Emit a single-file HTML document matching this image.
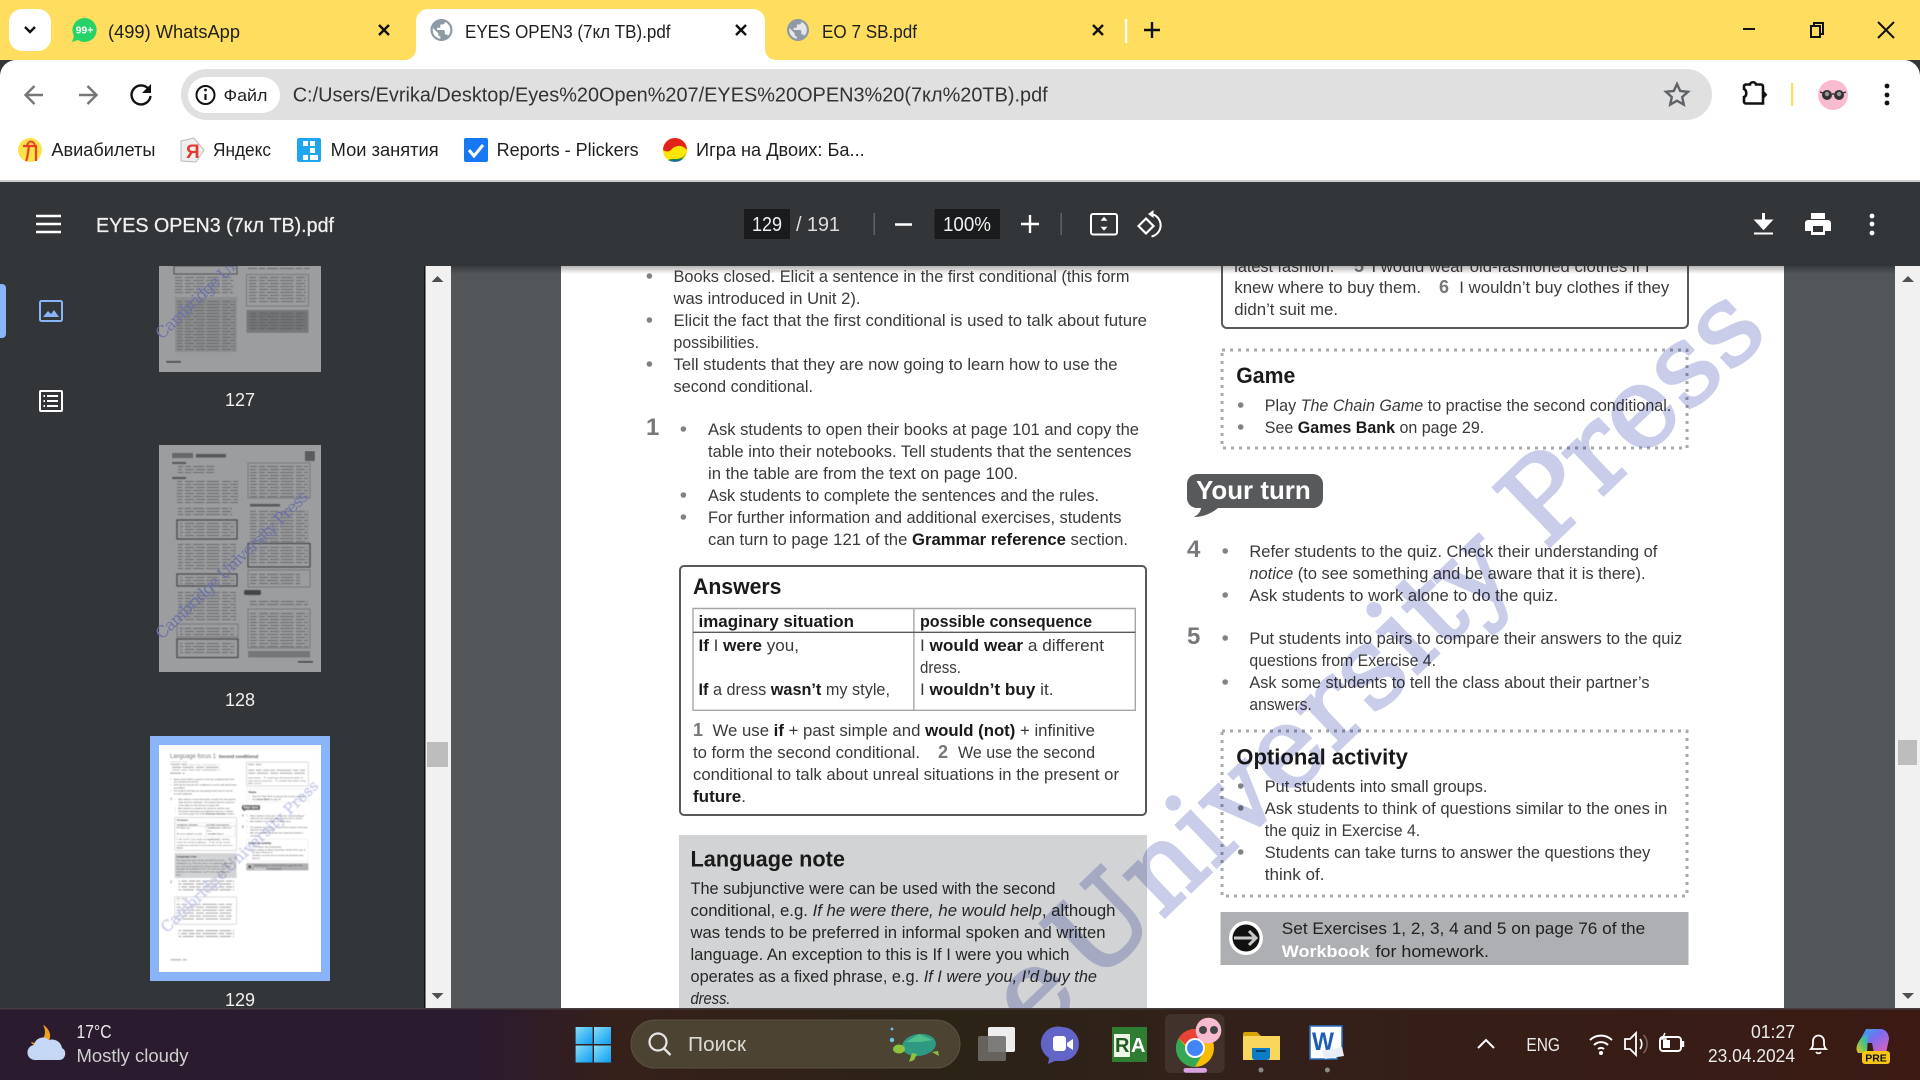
<!DOCTYPE html>
<html lang="ru"><head><meta charset="utf-8"><title>EYES OPEN3 (7кл ТВ).pdf</title>
<style>
html,body{margin:0;padding:0;width:1920px;height:1080px;overflow:hidden;background:#323639}
svg{display:block;position:absolute;left:0;top:0;overflow:hidden}
text{font-family:"Liberation Sans","Noto Sans CJK SC",sans-serif;white-space:pre}
.ui{font-size:18px;fill:#1f1f1f}
.bm{font-size:18px;fill:#1f1f1f}
.w{fill:#fff}
.vt{font-size:20px;fill:#f1f1f1}
.tb{font-size:18px;fill:#ececec}
.p{font-size:16.5px;fill:#3a3a3c}
.b{font-weight:bold;fill:#1a1a1a}
.i{font-style:italic}
.h{font-size:22px;font-weight:bold;fill:#1a1a1a}
.n{font-weight:bold;fill:#77787b}
.bl{fill:#808285}
.wm{font-family:"DejaVu Serif",serif;font-size:112px;fill:#c9cdea;stroke:#c9cdea;stroke-width:3}
.wt{font-family:"DejaVu Serif",serif;font-size:16px;fill:#6e74a8}
.lab{font-size:18px;fill:#f0f0f0;text-anchor:middle}
</style></head><body>
<svg width="1920" height="1080" viewBox="0 0 1920 1080" xmlns="http://www.w3.org/2000/svg">
<defs>
<clipPath id="cpage"><rect x="561" y="266" width="1223" height="742"/></clipPath>
<clipPath id="cside"><rect x="0" y="266" width="425" height="742"/></clipPath>
<clipPath id="cth"><rect x="159" y="745" width="162" height="227"/></clipPath>
<filter id="soft" x="0" y="0" width="100%" height="100%"><feGaussianBlur stdDeviation=".4"/></filter>
<pattern id="pl" width="280" height="44" patternUnits="userSpaceOnUse"><path d="M0 12h60M72 12h96M180 12h84M0 34h36M48 34h110M170 34h44M226 34h48" stroke="#9a9a9a" stroke-width="8"/></pattern>
<pattern id="ln" width="37" height="6" patternUnits="userSpaceOnUse"><path d="M0 1.500h9M11 1.500h9M22 1.500h12M0 4.500h6M8 4.500h11M21 4.500h14" stroke="#55565a" stroke-opacity=".75" stroke-width="1"/></pattern>
<linearGradient id="tbg" x1="0" x2="1" y1="0" y2="0"><stop offset="0" stop-color="#2a1b2e"/><stop offset=".25" stop-color="#2a1a2d"/><stop offset=".32" stop-color="#36201a"/><stop offset=".5" stop-color="#2b2316"/><stop offset=".65" stop-color="#33201a"/><stop offset="1" stop-color="#3a1a13"/></linearGradient>
<linearGradient id="win" x1="0" y1="0" x2="1" y2="1"><stop offset="0" stop-color="#86dcf8"/><stop offset="1" stop-color="#0b9df2"/></linearGradient>
<linearGradient id="shd" x1="0" y1="0" x2="0" y2="1"><stop offset="0" stop-color="#000" stop-opacity=".3"/><stop offset="1" stop-color="#000" stop-opacity="0"/></linearGradient>
<linearGradient id="cop" x1="0" y1="0" x2="1" y2="1"><stop offset="0" stop-color="#22b5e8"/><stop offset=".45" stop-color="#7c6cf0"/><stop offset="1" stop-color="#e85fb0"/></linearGradient>
<linearGradient id="cop2" x1="0" y1="1" x2="1" y2="0"><stop offset="0" stop-color="#f5c518"/><stop offset=".5" stop-color="#5ec46e"/><stop offset="1" stop-color="#28b0e0"/></linearGradient>
<path id="globe" d="M12 2C6.480 2 2 6.480 2 12s4.480 10 10 10 10-4.480 10-10S17.520 2 12 2zm-1 17.930c-3.950-.490-7-3.850-7-7.930 0-.620.080-1.210.210-1.790L9 15v1c0 1.100.900 2 2 2v1.930zm6.900-2.540c-.260-.810-1-1.390-1.900-1.390h-1v-3c0-.550-.450-1-1-1H8v-2h2c.550 0 1-.450 1-1V7h2c1.100 0 2-.900 2-2v-.410c2.930 1.190 5 4.060 5 7.410 0 2.080-.800 3.970-2.100 5.390z"/>
<g id="pgx">
<text class="n" x="646" y="1060" style="font-size:24px">2</text>
<rect x="708" y="1040" width="420" height="88" fill="url(#pl)"/>
<rect x="680" y="1166" width="466" height="206" rx="4" fill="#fff" stroke="#58595b" stroke-width="2"/>
<rect x="693" y="1176" width="90" height="22" fill="url(#pl)"/>
<rect x="693" y="1210" width="420" height="132" fill="url(#pl)"/>
<rect x="708" y="1406" width="420" height="66" fill="url(#pl)"/>
<rect x="650" y="1632" width="120" height="22" fill="url(#pl)"/>
<g transform="translate(1100 921) rotate(-43.900)"><text class="wm" x="-706" y="42" textLength="567" lengthAdjust="spacing">Cambridg</text></g>
</g>
<g id="pg">
<text x="644" y="118" style="font-size:46px;fill:#777" textLength="347" lengthAdjust="spacingAndGlyphs">Language focus 1</text>
<text x="1011" y="118" style="font-size:34px;font-weight:bold;fill:#555" textLength="299" lengthAdjust="spacingAndGlyphs">Second conditional</text>
<rect x="645" y="145" width="130" height="22" fill="url(#pl)"/>
<rect x="660" y="167" width="360" height="44" fill="url(#pl)"/>
<rect x="645" y="224" width="110" height="22" fill="url(#pl)"/>
<rect x="1222" y="148" width="466" height="180" rx="5" fill="#fff" stroke="#58595b" stroke-width="2"/>
<rect x="1234" y="156" width="100" height="22" fill="url(#pl)"/>
<rect x="1234" y="198" width="430" height="44" fill="url(#pl)"/>
<!-- left column -->
<circle class="bl" cx="649.400" cy="276" r="2.800"/><circle class="bl" cx="649.400" cy="320" r="2.800"/><circle class="bl" cx="649.400" cy="364" r="2.800"/>
<text class="p" x="673.500" y="282" textLength="456" lengthAdjust="spacingAndGlyphs">Books closed. Elicit a sentence in the first conditional (this form</text>
<text class="p" x="673.500" y="304" textLength="187" lengthAdjust="spacingAndGlyphs">was introduced in Unit 2).</text>
<text class="p" x="673.500" y="326" textLength="473.500" lengthAdjust="spacingAndGlyphs">Elicit the fact that the first conditional is used to talk about future</text>
<text class="p" x="673.500" y="348" textLength="85.500" lengthAdjust="spacingAndGlyphs">possibilities.</text>
<text class="p" x="673.500" y="370" textLength="444" lengthAdjust="spacingAndGlyphs">Tell students that they are now going to learn how to use the</text>
<text class="p" x="673.500" y="392" textLength="139.500" lengthAdjust="spacingAndGlyphs">second conditional.</text>
<text class="n" x="646" y="435" style="font-size:24px">1</text>
<circle class="bl" cx="683.400" cy="429" r="2.800"/><circle class="bl" cx="683.400" cy="495" r="2.800"/><circle class="bl" cx="683.400" cy="517" r="2.800"/>
<text class="p" x="708" y="435" textLength="431" lengthAdjust="spacingAndGlyphs">Ask students to open their books at page 101 and copy the</text>
<text class="p" x="708" y="457" textLength="423.500" lengthAdjust="spacingAndGlyphs">table into their notebooks. Tell students that the sentences</text>
<text class="p" x="708" y="479" textLength="310" lengthAdjust="spacingAndGlyphs">in the table are from the text on page 100.</text>
<text class="p" x="708" y="501" textLength="391" lengthAdjust="spacingAndGlyphs">Ask students to complete the sentences and the rules.</text>
<text class="p" x="708" y="523" textLength="413.500" lengthAdjust="spacingAndGlyphs">For further information and additional exercises, students</text>
<text class="p" x="708" y="545" textLength="420" lengthAdjust="spacingAndGlyphs">can turn to page 121 of the <tspan class="b">Grammar reference</tspan> section.</text>
<rect x="680" y="566" width="466" height="249" rx="4" fill="#fff" stroke="#58595b" stroke-width="2"/>
<text class="h" x="693" y="594" textLength="88.500" lengthAdjust="spacingAndGlyphs">Answers</text>
<path d="M693 608.500H1135.300V710.300H693Z M913.900 608.500V710.300" fill="none" stroke="#a5a6a8" stroke-width="1.400"/>
<path d="M693 632.300H1135.300" stroke="#58595b" stroke-width="1.400"/>
<text class="p b" x="698.500" y="627" textLength="155.500" lengthAdjust="spacingAndGlyphs">imaginary situation</text>
<text class="p b" x="920" y="627" textLength="172" lengthAdjust="spacingAndGlyphs">possible consequence</text>
<text class="p" x="698.500" y="651" textLength="100.500" lengthAdjust="spacingAndGlyphs"><tspan class="b">If</tspan> I <tspan class="b">were</tspan> you,</text>
<text class="p" x="920" y="651" textLength="184" lengthAdjust="spacingAndGlyphs">I <tspan class="b">would wear</tspan> a different</text>
<text class="p" x="920" y="673" textLength="41" lengthAdjust="spacingAndGlyphs">dress.</text>
<text class="p" x="698.500" y="695" textLength="191.500" lengthAdjust="spacingAndGlyphs"><tspan class="b">If</tspan> a dress <tspan class="b">wasn’t</tspan> my style,</text>
<text class="p" x="920" y="695" textLength="133.500" lengthAdjust="spacingAndGlyphs">I <tspan class="b">wouldn’t buy</tspan> it.</text>
<text class="n" x="693" y="736" style="font-size:18px">1</text>
<text class="p" x="712.500" y="736" textLength="382.500" lengthAdjust="spacingAndGlyphs">We use <tspan class="b">if</tspan> + past simple and <tspan class="b">would (not)</tspan> + infinitive</text>
<text class="p" x="693" y="758" textLength="227" lengthAdjust="spacingAndGlyphs">to form the second conditional.</text>
<text class="n" x="938" y="758" style="font-size:18px">2</text>
<text class="p" x="958" y="758" textLength="137" lengthAdjust="spacingAndGlyphs">We use the second</text>
<text class="p" x="693" y="780" textLength="426" lengthAdjust="spacingAndGlyphs">conditional to talk about unreal situations in the present or</text>
<text class="p" x="693" y="802" textLength="53" lengthAdjust="spacingAndGlyphs"><tspan class="b">future</tspan>.</text>
<rect x="679" y="835" width="468" height="188" fill="#d1d3d4"/>
<text class="h" x="690.500" y="866.500" textLength="154.500" lengthAdjust="spacingAndGlyphs">Language note</text>
<text class="p" style="fill:#262626" x="690.500" y="894" textLength="365" lengthAdjust="spacingAndGlyphs">The subjunctive were can be used with the second</text>
<text class="p" style="fill:#262626" x="690.500" y="916" textLength="425" lengthAdjust="spacingAndGlyphs">conditional, e.g. <tspan class="i">If he were there, he would help</tspan>, although</text>
<text class="p" style="fill:#262626" x="690.500" y="938" textLength="415" lengthAdjust="spacingAndGlyphs">was tends to be preferred in informal spoken and written</text>
<text class="p" style="fill:#262626" x="690.500" y="960" textLength="379" lengthAdjust="spacingAndGlyphs">language. An exception to this is If I were you which</text>
<text class="p" style="fill:#262626" x="690.500" y="982" textLength="406.500" lengthAdjust="spacingAndGlyphs">operates as a fixed phrase, e.g. <tspan class="i">If I were you, I’d buy the</tspan></text>
<text class="p i" style="fill:#262626" x="690.500" y="1004" textLength="40" lengthAdjust="spacingAndGlyphs">dress.</text>
<!-- right column -->
<text class="p" x="1234.300" y="272" textLength="100" lengthAdjust="spacingAndGlyphs">latest fashion.</text>
<text class="n" x="1354" y="272" style="font-size:18px">5</text>
<text class="p" x="1371.500" y="272" textLength="278" lengthAdjust="spacingAndGlyphs">I would wear old-fashioned clothes if I</text>
<text class="p" x="1234.300" y="293" textLength="186.700" lengthAdjust="spacingAndGlyphs">knew where to buy them.</text>
<text class="n" x="1439" y="293" style="font-size:18px">6</text>
<text class="p" x="1459.300" y="293" textLength="210" lengthAdjust="spacingAndGlyphs">I wouldn’t buy clothes if they</text>
<text class="p" x="1234.300" y="315" textLength="103.700" lengthAdjust="spacingAndGlyphs">didn’t suit me.</text>
<rect x="1222" y="350" width="465" height="98" fill="none" stroke="#a7a9ac" stroke-width="3" stroke-dasharray="3 5"/>
<text class="h" x="1236.300" y="383" textLength="59" lengthAdjust="spacingAndGlyphs">Game</text>
<circle class="bl" cx="1240.700" cy="405" r="2.800"/><circle class="bl" cx="1240.700" cy="427" r="2.800"/>
<text class="p" x="1264.800" y="411" textLength="406.500" lengthAdjust="spacingAndGlyphs">Play <tspan class="i">The Chain Game</tspan> to practise the second conditional.</text>
<text class="p" x="1264.800" y="433" textLength="219.400" lengthAdjust="spacingAndGlyphs">See <tspan class="b">Games Bank</tspan> on page 29.</text>
<path d="M1197 474H1313a10 10 0 0 1 10 10v14a10 10 0 0 1-10 10H1218c-6 5-14 9-24 9c4-2 7-6 7-9h-4a10 10 0 0 1-10-10v-14a10 10 0 0 1 10-10z" fill="#58595b"/>
<text x="1196" y="499" style="font-size:26px;font-weight:bold;fill:#fff" textLength="114.700" lengthAdjust="spacingAndGlyphs">Your turn</text>
<text class="n" x="1187" y="557" style="font-size:24px">4</text>
<circle class="bl" cx="1225.200" cy="551" r="2.800"/><circle class="bl" cx="1225.200" cy="595" r="2.800"/>
<text class="p" x="1249.400" y="557" textLength="408" lengthAdjust="spacingAndGlyphs">Refer students to the quiz. Check their understanding of</text>
<text class="p" x="1249.400" y="579" textLength="396.200" lengthAdjust="spacingAndGlyphs"><tspan class="i">notice</tspan> (to see something and be aware that it is there).</text>
<text class="p" x="1249.400" y="601" textLength="308.800" lengthAdjust="spacingAndGlyphs">Ask students to work alone to do the quiz.</text>
<text class="n" x="1187" y="644" style="font-size:24px">5</text>
<circle class="bl" cx="1225.200" cy="638" r="2.800"/><circle class="bl" cx="1225.200" cy="682" r="2.800"/>
<text class="p" x="1249.400" y="644" textLength="432.900" lengthAdjust="spacingAndGlyphs">Put students into pairs to compare their answers to the quiz</text>
<text class="p" x="1249.400" y="666" textLength="186.600" lengthAdjust="spacingAndGlyphs">questions from Exercise 4.</text>
<text class="p" x="1249.400" y="688" textLength="400.100" lengthAdjust="spacingAndGlyphs">Ask some students to tell the class about their partner’s</text>
<text class="p" x="1249.400" y="710" textLength="62.400" lengthAdjust="spacingAndGlyphs">answers.</text>
<rect x="1222" y="731" width="465" height="165" fill="none" stroke="#a7a9ac" stroke-width="3" stroke-dasharray="3 5"/>
<text class="h" x="1236.300" y="764.500" textLength="171.600" lengthAdjust="spacingAndGlyphs">Optional activity</text>
<circle class="bl" cx="1240.700" cy="786" r="2.800"/><circle class="bl" cx="1240.700" cy="808" r="2.800"/><circle class="bl" cx="1240.700" cy="852" r="2.800"/>
<text class="p" x="1264.800" y="792" textLength="222.600" lengthAdjust="spacingAndGlyphs">Put students into small groups.</text>
<text class="p" x="1264.800" y="814" textLength="402.500" lengthAdjust="spacingAndGlyphs">Ask students to think of questions similar to the ones in</text>
<text class="p" x="1264.800" y="836" textLength="155.400" lengthAdjust="spacingAndGlyphs">the quiz in Exercise 4.</text>
<text class="p" x="1264.800" y="858" textLength="385.500" lengthAdjust="spacingAndGlyphs">Students can take turns to answer the questions they</text>
<text class="p" x="1264.800" y="880" textLength="59.700" lengthAdjust="spacingAndGlyphs">think of.</text>
<rect x="1220.500" y="912" width="468" height="53" fill="#aeafb2"/>
<circle cx="1246" cy="938" r="17" fill="#fff"/><circle cx="1246" cy="938" r="13.500" fill="#111"/>
<path d="M1234 938h22M1249 931l7 7-7 7" fill="none" stroke="#c8c8c8" stroke-width="3"/>
<text class="p" style="fill:#1f1f1f" x="1281.800" y="934" textLength="363.400" lengthAdjust="spacingAndGlyphs">Set Exercises 1, 2, 3, 4 and 5 on page 76 of the</text>
<text class="p" style="font-weight:bold;fill:#fff" x="1281.800" y="957" textLength="87.800" lengthAdjust="spacingAndGlyphs">Workbook</text>
<text class="p" style="fill:#1f1f1f" x="1375.500" y="957" textLength="113.500" lengthAdjust="spacingAndGlyphs">for homework.</text>
<g style="mix-blend-mode:multiply"><g transform="translate(1100 921) rotate(-43.900)">
<text class="wm" x="-50" y="42" textLength="940" lengthAdjust="spacing">University Press</text>
<text class="wm" x="-132" y="42">e</text>
</g></g>
</g>
</defs>

<!-- tab strip -->
<rect width="1920" height="60" fill="#ffdd5e"/>
<rect x="9" y="9" width="42" height="42" rx="13" fill="#fff"/>
<path d="M25 27l5 5 5-5" fill="none" stroke="#111" stroke-width="2.400"/>
<path d="M84.500 18a12 12 0 1 1-6.500 22l-6 2 2-6a12 12 0 0 1 10.500-18z" fill="#25d366"/>
<text x="84.500" y="33.500" text-anchor="middle" style="font-size:10.500px;font-weight:bold;fill:#fff">99+</text>
<text class="ui" x="108" y="38" textLength="132" lengthAdjust="spacingAndGlyphs">(499) WhatsApp</text>
<path d="M379 25l10 10M389 25l-10 10" stroke="#111" stroke-width="2.400"/>
<path d="M404 60c8 0 12-5 12-12V21a12 12 0 0 1 12-12H753a12 12 0 0 1 12 12V48c0 7 4 12 12 12z" fill="#fff"/>
<use href="#globe" transform="translate(428.300 16.800) scale(1.100)" fill="#8e9aa6"/>
<text class="ui" x="465" y="38" textLength="205.500" lengthAdjust="spacingAndGlyphs">EYES OPEN3 (7кл ТВ).pdf</text>
<path d="M736 25l10 10M746 25l-10 10" stroke="#111" stroke-width="2.400"/>
<circle cx="798" cy="30" r="10" fill="#e6e6e6"/>
<use href="#globe" transform="translate(784.800 16.800) scale(1.100)" fill="#8e9aa6"/>
<text class="ui" x="822" y="38" textLength="95" lengthAdjust="spacingAndGlyphs">EO 7 SB.pdf</text>
<path d="M1093 25l10 10M1103 25l-10 10" stroke="#111" stroke-width="2.400"/>
<rect x="1125" y="19" width="2.200" height="24" fill="#fff"/>
<path d="M1152 22v16M1144 30h16" stroke="#111" stroke-width="2.400"/>
<path d="M1743 29h12" stroke="#111" stroke-width="2"/>
<path d="M1811 26h9v11h-9zM1814 26v-3h9v11h-3" fill="none" stroke="#111" stroke-width="2"/>
<path d="M1878 22l16 16M1894 22l-16 16" stroke="#111" stroke-width="2"/>

<!-- toolbar -->
<path d="M0 180V76a16 16 0 0 1 16-16H1904a16 16 0 0 1 16 16V180z" fill="#fff"/>
<rect y="180" width="1920" height="2" fill="#ccc"/>
<path d="M43 95H26M34.500 86l-9 9 9 9" fill="none" stroke="#777" stroke-width="2.400"/>
<path d="M79 95H96M87.500 86l9 9-9 9" fill="none" stroke="#777" stroke-width="2.400"/>
<path d="M148.500 89a9.500 9.500 0 1 0 2 7" fill="none" stroke="#111" stroke-width="2.400"/>
<path d="M151 84v9h-9z" fill="#111"/>
<rect x="181" y="69" width="1531" height="51" rx="25.500" fill="#e0e0e0"/>
<rect x="188" y="77" width="92" height="36" rx="18" fill="#fff"/>
<circle cx="205.500" cy="95" r="9" fill="none" stroke="#111" stroke-width="2"/>
<path d="M205.500 94v6" stroke="#111" stroke-width="2.200"/><circle cx="205.500" cy="90" r="1.400" fill="#111"/>
<text x="223.500" y="101" style="font-size:16.500px;fill:#222" textLength="44" lengthAdjust="spacingAndGlyphs">Файл</text>
<text x="292.700" y="101.500" style="font-size:20px;fill:#333" textLength="755" lengthAdjust="spacingAndGlyphs">C:/Users/Evrika/Desktop/Eyes%20Open%207/EYES%20OPEN3%20(7кл%20TB).pdf</text>
<path d="M1677 84l3.200 7 7.800.800-5.800 5.200 1.600 7.600-6.800-3.900-6.800 3.900 1.600-7.600-5.800-5.200 7.800-.800z" fill="none" stroke="#5f6368" stroke-width="2.400"/>
<path d="M1745.500 84.500h4.500c.5-3 5.500-3 6 0h5a2 2 0 0 1 2 2v17h-17a2 2 0 0 1-2-2v-4.500c3-1 3-6.500 0-8V86.500a2 2 0 0 1 1.500-2z" fill="none" stroke="#111" stroke-width="2.600"/>
<path d="M1764 91l3.400 3.700-3.400 3.700z" fill="#111"/>
<rect x="1791" y="83" width="2.200" height="23" fill="#ffdd5e"/>
<circle cx="1833" cy="95" r="15" fill="#f9bbd0"/>
<circle cx="1827" cy="95" r="5" fill="#333"/><circle cx="1839" cy="95" r="5" fill="#333"/><circle cx="1827" cy="94" r="2.200" fill="#999"/><circle cx="1839" cy="94" r="2.200" fill="#999"/>
<path d="M1820 92l3 1M1832 94h2M1846 92l-3 1" stroke="#333" stroke-width="1.400"/>
<circle cx="1887" cy="86" r="2.400" fill="#111"/><circle cx="1887" cy="95" r="2.400" fill="#111"/><circle cx="1887" cy="103" r="2.400" fill="#111"/>

<!-- bookmarks -->
<ellipse cx="30" cy="150" rx="12" ry="12" fill="#fde24a"/>
<path d="M23 146h14M26 161c2-4 2-10 3-15M36 161v-15" fill="none" stroke="#e8412a" stroke-width="2.200"/>
<path d="M27 146c1-6 7-6 8 0" fill="none" stroke="#e8412a" stroke-width="2"/>
<text class="bm" x="51.400" y="156" textLength="104" lengthAdjust="spacingAndGlyphs">Авиабилеты</text>
<path d="M181 141l13-3 10 12-8 12-15-1z" fill="#eee" stroke="#bbb"/>
<text x="186" y="158" style="font-size:19px;font-weight:bold;fill:#e53a32">Я</text>
<text class="bm" x="213" y="156" textLength="58" lengthAdjust="spacingAndGlyphs">Яндекс</text>
<rect x="297" y="138" width="24" height="24" rx="2" fill="#1ea7f0"/>
<path d="M303 141h5v5h-5zM310 141h5v5h-5zM310 148h5v5h-5zM303 155h5v5h-5zM310 155h8v5h-8z" fill="#fff"/>
<text class="bm" x="330.700" y="156" textLength="108" lengthAdjust="spacingAndGlyphs">Мои занятия</text>
<rect x="464" y="138" width="24" height="24" rx="2" fill="#1877f2"/>
<path d="M469 150l5 6 9-11" fill="none" stroke="#fff" stroke-width="3"/>
<text class="bm" x="496.600" y="156" textLength="142" lengthAdjust="spacingAndGlyphs">Reports - Plickers</text>
<circle cx="675" cy="150" r="12" fill="#ffe600"/>
<path d="M663 150a12 12 0 0 1 24 0c-5-6-12-5-16 0-2 2-5 2-8 0z" fill="#e2231a"/>
<path d="M668 160c5 3 14 3 19-8-3 6-8 7-12 7-3 0-5 0-7 1z" fill="#1b8a3a"/><path d="M669 160a12 12 0 0 0 14-1c-4 1-9 2-14 1z" fill="#0a66c2"/>
<text class="bm" x="696" y="156" textLength="168.700" lengthAdjust="spacingAndGlyphs">Игра на Двоих: Ба...</text>

<!-- PDF viewer -->
<rect y="182" width="1920" height="826" fill="#525659"/>
<rect y="182" width="1920" height="84" fill="#323639"/>
<rect x="0" y="266" width="425" height="742" fill="#323639"/>
<rect x="425" y="266" width="26" height="742" fill="#f1f1f1"/><rect x="424" y="266" width="1.500" height="742" fill="#111"/>
<rect x="427" y="742" width="21" height="25" fill="#bdbdbd"/>
<path d="M431.500 282l6-6 6 6z" fill="#505050"/><path d="M431.500 993l6 6 6-6z" fill="#505050"/>
<rect x="561" y="266" width="1223" height="742" fill="#fff"/>
<rect x="1895" y="266" width="25" height="742" fill="#f1f1f1"/>
<rect x="1898" y="740" width="19" height="25" fill="#bdbdbd"/>
<path d="M1902 282l6-6 6 6z" fill="#505050"/><path d="M1902 993l6 6 6-6z" fill="#505050"/>
<g clip-path="url(#cpage)"><use href="#pg"/></g>
<rect x="451" y="266" width="1444" height="8" fill="url(#shd)"/>

<!-- viewer toolbar -->
<path d="M36 216h25M36 224h25M36 232h25" stroke="#fff" stroke-width="2.600"/>
<text class="vt" x="96" y="232" textLength="238" lengthAdjust="spacingAndGlyphs" style="stroke:#f1f1f1;stroke-width:.25">EYES OPEN3 (7кл ТВ).pdf</text>
<rect x="744" y="209" width="46" height="30" fill="#191b1c"/>
<text class="vt" x="767" y="231" text-anchor="middle" textLength="30" lengthAdjust="spacingAndGlyphs">129</text>
<text class="vt" x="796" y="231" style="fill:#ddd" textLength="44" lengthAdjust="spacing">/ 191</text>
<rect x="873.500" y="213" width="1.400" height="22" fill="#666"/>
<path d="M895 224.500h17" stroke="#fff" stroke-width="2.400"/>
<rect x="934.500" y="209" width="65.500" height="30" fill="#191b1c"/>
<text class="vt" x="967" y="231" text-anchor="middle" textLength="48" lengthAdjust="spacingAndGlyphs">100%</text>
<path d="M1030 215v18M1021 224h18" stroke="#fff" stroke-width="2.400"/>
<rect x="1060.500" y="213" width="1.400" height="22" fill="#666"/>
<rect x="1091" y="214" width="26" height="20.500" rx="2" fill="none" stroke="#fff" stroke-width="2"/>
<path d="M1104 216.700l3.500 4h-7zM1104 230.700l3.500-4h-7z" fill="#fff"/>
<path d="M1146 218.500l7.500 7.500-7.500 7.500-7.500-7.500z" fill="none" stroke="#fff" stroke-width="2.200"/>
<path d="M1151.500 214a11.500 11.500 0 0 1 0 22.500" fill="none" stroke="#fff" stroke-width="2"/>
<path d="M1153.500 210v8l-5.500-4z" fill="#fff"/>
<path d="M1763.500 213v11M1757 221l6.500 7 6.500-7z" fill="#fff" stroke="#fff" stroke-width="3"/>
<path d="M1754 233.500h19" stroke="#fff" stroke-width="2"/>
<path d="M1811 213h14v6h-14z" fill="#fff"/>
<path d="M1808 220h20a3 3 0 0 1 3 3v8h-6v4h-14v-4h-6v-8a3 3 0 0 1 3-3z" fill="#fff"/>
<rect x="1813" y="226" width="10" height="6" fill="#323639"/>
<circle cx="1872" cy="216" r="2.400" fill="#fff"/><circle cx="1872" cy="224" r="2.400" fill="#fff"/><circle cx="1872" cy="233" r="2.400" fill="#fff"/>

<!-- sidebar -->
<path d="M0 284h2a4 4 0 0 1 4 4v46a4 4 0 0 1-4 4H0z" fill="#8ab4f8"/>
<rect x="40" y="301" width="22" height="20" rx="1.500" fill="none" stroke="#8ab4f8" stroke-width="2"/>
<path d="M43 317l5-6 3 3 3-4 5 7z" fill="#8ab4f8"/>
<rect x="40" y="391" width="22" height="20" rx="1" fill="none" stroke="#fff" stroke-width="2"/>
<path d="M47 396h11M47 401h11M47 406h11" stroke="#fff" stroke-width="2"/><path d="M43.500 396h1.500M43.500 401h1.500M43.500 406h1.500" stroke="#fff" stroke-width="2"/>
<g clip-path="url(#cside)">
<!-- thumb 127 -->
<rect x="159" y="145" width="162" height="227" fill="#9c9d9f"/>
<g filter="url(#soft)">
<rect x="174" y="266" width="63" height="8" fill="none" stroke="#4c4d50"/>
<rect x="175" y="277" width="58" height="17" fill="url(#ln)"/>
<rect x="175" y="297" width="62" height="55" fill="#8c8d8f"/><rect x="177" y="299" width="58" height="51" fill="url(#ln)"/>
<rect x="166" y="361" width="15" height="2" fill="#555"/>
<rect x="248" y="266" width="62" height="5" fill="url(#ln)"/>
<rect x="246.500" y="274.500" width="62" height="31.500" fill="none" stroke="#77787b"/><rect x="249" y="277" width="57" height="27" fill="url(#ln)"/>
<rect x="246.500" y="310" width="62" height="22.700" fill="#757678"/><rect x="250" y="312" width="55" height="18" fill="url(#ln)"/>
</g>
<text class="wt" x="162" y="340" transform="rotate(-44 162 340)" textLength="205" lengthAdjust="spacing">Cambridge University Press</text>
<!-- thumb 128 -->
<rect x="159" y="445" width="162" height="227" fill="#9c9d9f"/>
<g filter="url(#soft)">
<rect x="172" y="453" width="21" height="5" fill="#66676a"/><rect x="196" y="454" width="30" height="3.500" fill="#55565a"/>
<rect x="305" y="451" width="10" height="10" fill="#5a5b5e"/>
<rect x="172" y="462" width="14" height="2" fill="#55565a"/><rect x="178" y="466" width="36" height="8" fill="url(#ln)"/><rect x="172" y="477" width="14" height="2" fill="#55565a"/><rect x="177" y="481" width="61" height="22" fill="url(#ln)"/><rect x="178" y="507" width="54" height="10" fill="url(#ln)"/>
<rect x="177" y="520" width="60" height="19" fill="none" stroke="#444" stroke-width="1.200"/><rect x="180" y="523" width="54" height="14" fill="url(#ln)"/>
<rect x="178" y="542" width="58" height="28" fill="url(#ln)"/>
<rect x="177" y="574" width="60" height="12" fill="none" stroke="#444" stroke-width="1.200"/><rect x="180" y="576" width="54" height="8" fill="url(#ln)"/>
<rect x="178" y="591" width="58" height="30" fill="url(#ln)"/>
<rect x="177" y="624" width="61" height="13" fill="none" stroke="#77787b"/><rect x="180" y="627" width="54" height="8" fill="url(#ln)"/>
<rect x="177" y="639" width="61" height="18.500" fill="none" stroke="#444" stroke-width="1.200"/><rect x="180" y="641" width="54" height="14" fill="url(#ln)"/>
<rect x="248" y="463" width="62" height="35" fill="none" stroke="#77787b"/><rect x="250" y="465" width="58" height="32" fill="url(#ln)"/>
<rect x="250" y="504" width="30" height="2.500" fill="#55565a"/>
<rect x="250" y="510" width="58" height="32" fill="url(#ln)"/>
<rect x="248" y="543.500" width="62" height="23.500" fill="none" stroke="#444" stroke-width="1.200"/><rect x="250" y="546" width="58" height="19" fill="url(#ln)"/>
<rect x="248" y="570" width="62" height="17" fill="none" stroke="#77787b"/><rect x="250" y="572" width="50" height="13" fill="url(#ln)"/>
<rect x="244" y="590" width="17" height="5" rx="2" fill="#444"/>
<rect x="250" y="599" width="58" height="8" fill="url(#ln)"/>
<rect x="248" y="609" width="62" height="39" fill="none" stroke="#77787b"/><rect x="250" y="611" width="58" height="36" fill="url(#ln)"/>
<rect x="248" y="651" width="62" height="6.500" fill="#757678"/>
<rect x="298" y="661" width="15" height="2" fill="#555"/>
</g>
<text class="wt" x="162" y="640" transform="rotate(-44 162 640)" textLength="205" lengthAdjust="spacing">Cambridge University Press</text>
<!-- thumb 129 -->
<rect x="150" y="736" width="180" height="245" fill="#8ab4f8"/>
<rect x="159" y="745" width="162" height="227" fill="#fff"/>
<g clip-path="url(#cth)"><g filter="url(#soft)"><g transform="translate(159 745) scale(.1325) translate(-561 -19)"><use href="#pgx"/><use href="#pg"/></g></g></g>
<text class="lab" x="240" y="406">127</text>
<text class="lab" x="240" y="706">128</text>
<text class="lab" x="240" y="1006">129</text>
</g>

<!-- taskbar -->
<rect y="1008" width="1920" height="72" fill="url(#tbg)"/>
<rect y="1008" width="1920" height="1.500" fill="#443c3e"/>
<path d="M43 1025c3 5 3 12-3 17-2 1-6 1-9 0 1 3 6 5 11 4 6-2 9-7 8-12-1-4-4-8-7-9z" fill="#f0a020"/>
<path d="M36 1060a7.500 7.500 0 0 1-2-15 9 9 0 0 1 15-5 10 10 0 0 1 13 8 6.500 6.500 0 0 1-2 12z" fill="#c4d8f6"/>
<text x="76.500" y="1038" class="tb" textLength="35" lengthAdjust="spacingAndGlyphs">17°C</text>
<text x="76.500" y="1062" class="tb" style="fill:#cfcfcf" textLength="112" lengthAdjust="spacingAndGlyphs">Mostly cloudy</text>
<rect x="575.600" y="1027" width="17" height="17" fill="url(#win)"/><rect x="594" y="1027" width="17" height="17" fill="url(#win)"/><rect x="575.600" y="1045.500" width="17" height="17" fill="url(#win)"/><rect x="594" y="1045.500" width="17" height="17" fill="url(#win)"/>
<rect x="631" y="1020" width="329" height="48" rx="24" fill="#4d4332" stroke="#5c5242"/>
<circle cx="658" cy="1042" r="8.500" fill="none" stroke="#e6e6e6" stroke-width="2.200"/><path d="M664 1048.500l6.500 6.500" stroke="#e6e6e6" stroke-width="2.400"/>
<text x="688" y="1051" style="font-size:20px;fill:#dcdad6" textLength="58" lengthAdjust="spacingAndGlyphs">Поиск</text>
<ellipse cx="919" cy="1045" rx="17" ry="11" transform="rotate(-8 919 1045)" fill="#2f9a83"/>
<path d="M906 1042l13-8 14 6-12 2z" fill="#4fbe8a"/>
<ellipse cx="899" cy="1049" rx="6" ry="4.500" fill="#8fc33e"/>
<path d="M912 1053l-3 9 5-2 3-6zM932 1052l7 4-1-5z" fill="#8fc33e"/>
<circle cx="892" cy="1029" r="1.400" fill="#6cc4ea"/><circle cx="892" cy="1040" r="2.200" fill="#6cc4ea"/>
<rect x="988" y="1027" width="27" height="25" rx="2" fill="#eee"/>
<rect x="978" y="1036" width="28" height="25" rx="2" fill="#6e6c6a" fill-opacity=".88"/>
<path d="M1062 1027a17 17 0 0 1 0 34h-7l-7 3 1-6a17 17 0 0 1 13-31z" fill="#6264c8"/>
<rect x="1053" y="1036" width="13" height="15" rx="3" fill="#fff"/><path d="M1067 1043l6-4v11l-6-4z" fill="#fff"/>
<rect x="1112" y="1027" width="35" height="35" fill="#2e7d32"/><rect x="1114" y="1034" width="16" height="23" fill="#eef5e6"/>
<text x="1115" y="1052" style="font-size:20px;font-weight:bold;fill:#1e5c22">R</text><text x="1131" y="1052" style="font-size:20px;font-weight:bold;fill:#fff">A</text>
<rect x="1165" y="1014" width="59.500" height="59" rx="6" fill="#fff" fill-opacity=".08"/>
<circle cx="1195" cy="1048" r="19" fill="#fbbc04"/>
<path d="M1195 1029a19 19 0 0 1 16.500 9.500H1195a9.500 9.500 0 0 0-9 6.500l-7.500-6.500a19 19 0 0 1 16.500-9.500z" fill="#ea4335"/>
<path d="M1178.500 1038.500a19 19 0 0 0 16.500 28.500l8-14-8.500 3a9.500 9.500 0 0 1-9-10z" fill="#34a853"/>
<circle cx="1195" cy="1048" r="10" fill="#fff"/><circle cx="1195" cy="1048" r="8" fill="#4285f4"/>
<circle cx="1208.500" cy="1030.500" r="12.800" fill="#f9bbd0"/>
<circle cx="1203" cy="1030" r="4" fill="#444"/><circle cx="1214" cy="1030" r="4" fill="#444"/>
<rect x="1183.500" y="1068" width="23.500" height="4.700" rx="2.300" fill="#d6a3df"/>
<path d="M1243 1034a2 2 0 0 1 2-2h12l4 4h19v24h-37z" fill="#d8a200"/>
<rect x="1243" y="1036" width="37" height="24" rx="1" fill="#f9d65c"/>
<path d="M1252 1048h18v9a3 3 0 0 1-3 3h-12a3 3 0 0 1-3-3z" fill="#0a7cc8"/><rect x="1256" y="1050" width="10" height="2" fill="#0a3f6a"/>
<circle cx="1261" cy="1070" r="2.500" fill="#8f8a88"/>
<path d="M1310 1026h32v26h-5v7h-27z" fill="#fff" stroke="#2a6fc4" stroke-width="1.500"/>
<text x="1312" y="1050" style="font-size:25px;font-weight:bold;fill:#1d5eb4" textLength="22" lengthAdjust="spacingAndGlyphs">W</text>
<path d="M1322 1051l20-4 2 9-19 3z" fill="#e8eef8"/>
<circle cx="1327.400" cy="1070" r="2.500" fill="#8f8a88"/>
<path d="M1478 1048l8-8 8 8" fill="none" stroke="#fff" stroke-width="2"/>
<text class="tb" x="1526.400" y="1051" textLength="33.600" lengthAdjust="spacingAndGlyphs">ENG</text>
<path d="M1590 1040a16 16 0 0 1 22 0M1594 1045a10 10 0 0 1 14 0M1598 1049a4.500 4.500 0 0 1 6 0" fill="none" stroke="#fff" stroke-width="2"/><circle cx="1601" cy="1053" r="2" fill="#fff"/>
<path d="M1625 1039h5l6-6v22l-6-6h-5z" fill="none" stroke="#fff" stroke-width="1.800"/><path d="M1640 1039a8 8 0 0 1 0 10" fill="none" stroke="#fff" stroke-width="1.600"/><path d="M1643.500 1035a13 13 0 0 1 0 18" fill="none" stroke="#7a6660" stroke-width="1.500"/>
<rect x="1660" y="1037" width="21" height="14" rx="3" fill="none" stroke="#fff" stroke-width="2"/><rect x="1682" y="1041" width="2.200" height="6" fill="#fff"/><path d="M1665 1033l-3 6h4l-2 5" fill="none" stroke="#fff" stroke-width="1.500"/>
<rect x="1663" y="1040" width="7" height="8" fill="#fff"/>
<text class="tb" x="1795" y="1038" text-anchor="end" textLength="44" lengthAdjust="spacingAndGlyphs">01:27</text>
<text class="tb" x="1795" y="1062" text-anchor="end" textLength="87" lengthAdjust="spacingAndGlyphs">23.04.2024</text>
<path d="M1811 1049c2-2 2-4 2-8a5.500 5.500 0 0 1 11 0c0 4 0 6 2 8z" fill="none" stroke="#fff" stroke-width="1.800"/><path d="M1816 1052a3 3 0 0 0 5 0" fill="none" stroke="#fff" stroke-width="1.600"/>
<path d="M1866 1029h14c6 0 9 5 9 10l-3 14h-12l-2-10h-8l-4 10c-3-2-3-6-2-9z" fill="url(#cop)"/>
<path d="M1858 1043c3-6 6-8 10-8l-1 18h-9c-2-3-2-6 0-10z" fill="url(#cop2)"/>
<rect x="1862" y="1051" width="28" height="13" rx="3" fill="#f5c518"/>
<text x="1876" y="1061.500" text-anchor="middle" style="font-size:10.500px;font-weight:bold;fill:#111">PRE</text>
</svg>
</body></html>
